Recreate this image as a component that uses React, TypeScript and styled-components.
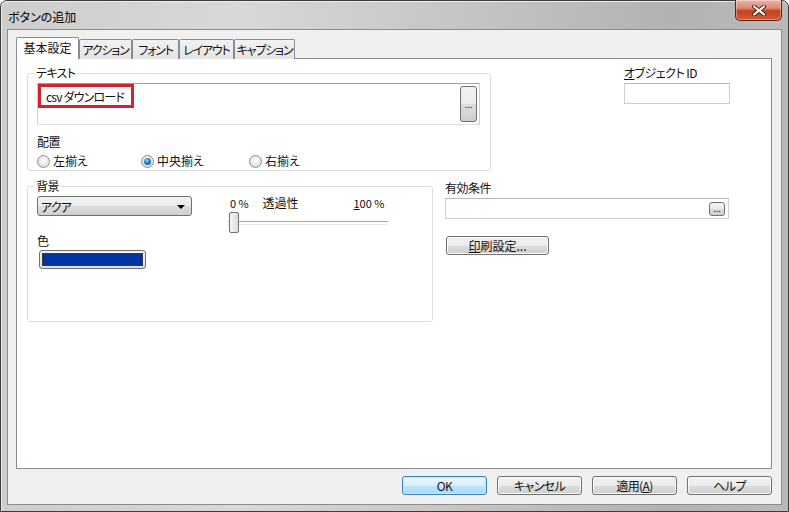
import React from 'react';
import styled, { createGlobalStyle } from 'styled-components';

const GlobalStyle = createGlobalStyle`
  html, body {
    margin: 0;
    padding: 0;
    background: #fff;
  }
  body {
    font-family: "Noto Sans CJK JP", "Noto Sans", sans-serif;
    font-size: 12px;
    color: #111;
    font-feature-settings: "palt";
  }
  * {
    box-sizing: border-box;
  }
`;

const btnGradient = 'linear-gradient(#f2f2f2 0%, #ebebeb 50%, #dddddd 51%, #cfcfcf 100%)';

const Window = styled.div`
  width: 789px;
  height: 512px;
  display: flex;
  flex-direction: column;
  padding: 0 6px 6px 6px;
  border: 1px solid #3c3c3c;
  border-radius: 7px 7px 0 0;
  background: linear-gradient(90deg, #cdcdcd 0%, #d8d8d8 30%, #c4c4c4 60%, #b2b2b2 85%, #bababa 100%);
  box-shadow: inset 1px 1px 0 #ececec;
`;

const TitleBar = styled.div`
  height: 28px;
  display: flex;
  align-items: center;
  justify-content: space-between;
  flex-shrink: 0;
`;

const Title = styled.span`
  padding-left: 1px;
  padding-top: 2px;
  color: #000;
`;

const CloseButton = styled.div`
  align-self: flex-start;
  margin-top: -1px;
  width: 47px;
  height: 21px;
  display: flex;
  align-items: center;
  justify-content: center;
  border: 1px solid #5a2316;
  border-top: none;
  border-radius: 0 0 5px 5px;
  background: linear-gradient(#eab3a5 0%, #dd8a74 40%, #c4411f 55%, #d65a38 100%);
  box-shadow: inset 0 0 0 1px rgba(255, 255, 255, 0.35);
`;

const Client = styled.div`
  flex: 1;
  display: flex;
  flex-direction: column;
  border: 1px solid #8c8c8c;
  background: #f0f0f0;
  padding: 7px 9px 0 8px;
`;

const TabStrip = styled.div`
  height: 22px;
  display: flex;
  align-items: flex-end;
  flex-shrink: 0;
`;

const Tab = styled.div<{ $active?: boolean; $width: number }>`
  position: relative;
  width: ${p => p.$width}px;
  height: ${p => (p.$active ? 22 : 20)}px;
  display: flex;
  align-items: center;
  justify-content: center;
  padding-bottom: ${p => (p.$active ? 2 : 1)}px;
  border: 1px solid #898c95;
  border-bottom: none;
  border-radius: 2px 2px 0 0;
  background: ${p => (p.$active ? '#fff' : 'linear-gradient(#f2f2f2, #e4e4e4)')};
  z-index: ${p => (p.$active ? 1 : 0)};
  white-space: nowrap;
  letter-spacing: ${p => (p.$active ? 0 : -1.2)}px;
  overflow: hidden;
`;

const Panel = styled.div`
  flex: 1;
  margin-top: -1px;
  border: 1px solid #898c95;
  background: #fff;
  padding: 7px 0 0 10px;
`;

const Row = styled.div<{ $gap?: number }>`
  display: flex;
  align-items: flex-start;
  margin-top: ${p => p.$gap ?? 0}px;
`;

const Group = styled.fieldset<{ $width: number; $height: number }>`
  margin: 0;
  min-width: 0;
  width: ${p => p.$width}px;
  height: ${p => p.$height}px;
  border: 1px solid #d5dfe5;
  border-radius: 3px;
  padding: 3px 10px 0 9px;
`;

const Legend = styled.legend`
  padding: 0 2px;
  margin-left: -3px;
  line-height: 14px;
  letter-spacing: -0.6px;
`;

const TextField = styled.div`
  width: 443px;
  height: 42px;
  display: flex;
  align-items: flex-start;
  background: #fff;
  border: 1px solid;
  border-color: #8fa3b3 #c4d3de #d6e1e9 #c4d3de;
`;

const Marked = styled.div`
  width: 96px;
  height: 24px;
  display: flex;
  align-items: center;
  padding-left: 5px;
  border: 3px solid #d3212d;
  white-space: nowrap;
  letter-spacing: -0.8px;
`;

const DotsButton = styled.div<{ $w: number; $h: number; $m: string }>`
  width: ${p => p.$w}px;
  height: ${p => p.$h}px;
  margin: ${p => p.$m};
  display: flex;
  align-items: center;
  justify-content: center;
  border: 1px solid #707070;
  border-radius: 3px;
  background: ${btnGradient};
  font-size: 9px;
  line-height: 1;
  color: #222;
`;

const FieldLabel = styled.div<{ $top?: number }>`
  line-height: 14px;
  margin-top: ${p => p.$top ?? 0}px;
  white-space: nowrap;
  letter-spacing: -0.5px;
`;

const RadioRow = styled.div`
  display: flex;
  margin-top: 5px;
  height: 14px;
`;

const RadioItem = styled.label<{ $width?: number }>`
  display: flex;
  align-items: center;
  gap: 3px;
  width: ${p => (p.$width ? `${p.$width}px` : 'auto')};
  line-height: 14px;
`;

const RadioMark = styled.span<{ $checked?: boolean }>`
  width: 13px;
  height: 13px;
  border-radius: 50%;
  border: 1px solid #8e8f8f;
  background: radial-gradient(circle at 50% 40%, #ffffff 0%, #e6e6e6 55%, #cfcfcf 100%);
  display: flex;
  align-items: center;
  justify-content: center;
  flex-shrink: 0;

  &::after {
    content: '';
    display: ${p => (p.$checked ? 'block' : 'none')};
    width: 7px;
    height: 7px;
    border-radius: 50%;
    background: radial-gradient(circle at 40% 35%, #8fd3f6 0%, #2b7dc0 45%, #0d3d73 100%);
  }
`;

const SideBlock = styled.div<{ $left: number }>`
  margin-left: ${p => p.$left}px;
  display: flex;
  flex-direction: column;
  align-items: flex-start;
`;

const PlainInput = styled.div<{ $width: number }>`
  width: ${p => p.$width}px;
  height: 21px;
  margin-top: 3px;
  display: flex;
  align-items: center;
  justify-content: flex-end;
  background: #fff;
  border: 1px solid #d0d0d0;
  border-top-color: #b8b8b8;
`;

const Underlined = styled.span`
  text-decoration: underline;
  text-underline-offset: 1px;
`;

const BgContent = styled.div`
  display: flex;
  align-items: flex-start;
`;

const LeftCol = styled.div`
  display: flex;
  flex-direction: column;
  align-items: flex-start;
`;

const Dropdown = styled.div`
  width: 155px;
  height: 20px;
  display: flex;
  align-items: center;
  justify-content: space-between;
  padding: 0 6px 0 3px;
  border: 1px solid #707070;
  border-radius: 3px;
  background: ${btnGradient};
  letter-spacing: -0.8px;
`;

const Caret = styled.span`
  width: 0;
  height: 0;
  border-left: 4px solid transparent;
  border-right: 4px solid transparent;
  border-top: 4px solid #000;
  margin-top: 1px;
`;

const Swatch = styled.div`
  width: 107px;
  height: 19px;
  margin: 2px 0 0 2px;
  padding: 2px;
  border: 1px solid #707070;
  border-radius: 3px;
  background: linear-gradient(#f4f4f4, #dedede);
`;

const SwatchFill = styled.div<{ $color: string }>`
  width: 100%;
  height: 100%;
  border: 1px solid #3a3a3a;
  background: ${p => p.$color};
`;

const SliderBox = styled.div`
  margin-left: 36px;
  width: 160px;
  display: flex;
  flex-direction: column;
`;

const SliderLabels = styled.div`
  display: flex;
  line-height: 14px;
  padding-left: 2px;
  white-space: nowrap;
`;

const SliderText = styled.span<{ $width: number; $size?: number }>`
  width: ${p => p.$width}px;
  font-size: ${p => p.$size ?? 11}px;
`;

const Track = styled.div`
  position: relative;
  height: 21px;
  margin-top: 2px;

  &::before {
    content: '';
    position: absolute;
    left: 0;
    right: 0;
    top: 9px;
    height: 2px;
    border-top: 1px solid #a9a9a9;
    border-bottom: 1px solid #e8e8e8;
  }
`;

const Thumb = styled.div`
  position: absolute;
  left: 1px;
  top: 0;
  width: 10px;
  height: 21px;
  border: 1px solid #707070;
  border-radius: 2px;
  background: linear-gradient(90deg, #f6f6f6, #dcdcdc);
`;

const PushButton = styled.div`
  width: 103px;
  height: 19px;
  margin: 17px 0 0 1px;
  display: flex;
  align-items: center;
  justify-content: center;
  border: 1px solid #707070;
  border-radius: 3px;
  background: ${btnGradient};
  box-shadow: inset 0 0 0 1px #fbfbfb;
  line-height: 1;
`;

const Footer = styled.div`
  height: 35px;
  flex-shrink: 0;
  display: flex;
  justify-content: flex-end;
  gap: 10px;
  padding-top: 7px;
`;

const DialogButton = styled.div<{ $default?: boolean }>`
  width: 85px;
  height: 19px;
  display: flex;
  align-items: center;
  justify-content: center;
  border: 1px solid ${p => (p.$default ? '#3c7fb1' : '#707070')};
  border-radius: 3px;
  background: ${p =>
    p.$default
      ? 'linear-gradient(#eaf6fd 0%, #d9f0fc 50%, #bee6fd 51%, #a7d9f5 100%)'
      : btnGradient};
  box-shadow: inset 0 0 0 1px ${p => (p.$default ? '#c5ecfc' : '#fbfbfb')};
  line-height: 1;
  letter-spacing: -0.6px;
`;

const tabs = [
  { label: '基本設定', width: 63, active: true },
  { label: 'アクション', width: 53 },
  { label: 'フォント', width: 47 },
  { label: 'レイアウト', width: 55 },
  { label: 'キャプション', width: 61 },
];

export default function App() {
  return (
    <>
      <GlobalStyle />
      <Window>
        <TitleBar>
          <Title>ボタンの追加</Title>
          <CloseButton>
            <svg width="14" height="11" viewBox="0 0 14 11">
              <path d="M2 1.5 L12 9.5 M12 1.5 L2 9.5" stroke="#4a1a10" strokeWidth="4" strokeLinecap="round" />
              <path d="M2 1.5 L12 9.5 M12 1.5 L2 9.5" stroke="#fff" strokeWidth="2.2" strokeLinecap="round" />
            </svg>
          </CloseButton>
        </TitleBar>
        <Client>
          <TabStrip>
            {tabs.map(t => (
              <Tab key={t.label} $active={t.active} $width={t.width}>
                {t.label}
              </Tab>
            ))}
          </TabStrip>
          <Panel>
            <Row>
              <Group $width={464} $height={105}>
                <Legend>テキスト</Legend>
                <TextField>
                  <Marked>csv ダウンロード</Marked>
                  <DotsButton $w={17} $h={36} $m="2px 2px 0 auto">...</DotsButton>
                </TextField>
                <FieldLabel $top={10}>配置</FieldLabel>
                <RadioRow>
                  <RadioItem $width={104}>
                    <RadioMark />
                    左揃え
                  </RadioItem>
                  <RadioItem $width={108}>
                    <RadioMark $checked />
                    中央揃え
                  </RadioItem>
                  <RadioItem>
                    <RadioMark />
                    右揃え
                  </RadioItem>
                </RadioRow>
              </Group>
              <SideBlock $left={133}>
                <FieldLabel>
                  <Underlined>オ</Underlined>ブジェクト ID
                </FieldLabel>
                <PlainInput $width={106} />
              </SideBlock>
            </Row>
            <Row $gap={8}>
              <Group $width={406} $height={143}>
                <Legend>背景</Legend>
                <BgContent>
                  <LeftCol>
                    <Dropdown>
                      <span>アクア</span>
                      <Caret />
                    </Dropdown>
                    <FieldLabel $top={18}>色</FieldLabel>
                    <Swatch>
                      <SwatchFill $color="#0033a3" />
                    </Swatch>
                  </LeftCol>
                  <SliderBox>
                    <SliderLabels>
                      <SliderText $width={33}>0 %</SliderText>
                      <SliderText $width={92} $size={12}>透過性</SliderText>
                      <SliderText $width={35}>
                        <Underlined>1</Underlined>00 %
                      </SliderText>
                    </SliderLabels>
                    <Track>
                      <Thumb />
                    </Track>
                  </SliderBox>
                </BgContent>
              </Group>
              <SideBlock $left={12}>
                <FieldLabel $top={2}>有効条件</FieldLabel>
                <PlainInput $width={284}>
                  <DotsButton $w={16} $h={14} $m="0 3px 0 0">...</DotsButton>
                </PlainInput>
                <PushButton>
                  <Underlined>印</Underlined>刷設定...
                </PushButton>
              </SideBlock>
            </Row>
          </Panel>
          <Footer>
            <DialogButton $default>OK</DialogButton>
            <DialogButton>キャンセル</DialogButton>
            <DialogButton>
              適用(<Underlined>A</Underlined>)
            </DialogButton>
            <DialogButton>ヘルプ</DialogButton>
          </Footer>
        </Client>
      </Window>
    </>
  );
}
